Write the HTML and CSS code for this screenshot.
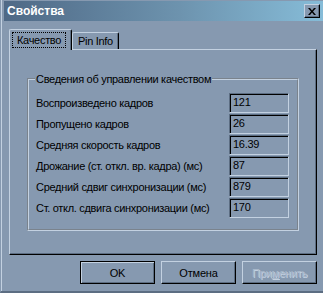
FILE: index.html
```html
<!DOCTYPE html>
<html lang="ru">
  <head>
    <meta charset="UTF-8" />
    <title>Свойства</title>
    <link rel="stylesheet" href="styles.css">
  </head>
  <body>
    <div class="window">
      <div class="titlebar">
        <span class="title">Свойства</span>
        <button class="close">
          <svg width="8" height="7" viewBox="0 0 8 7">
            <path d="M0 0h2l2 2.5 2-2.5h2l-3 3.5 3 3.5h-2l-2-2.5-2 2.5h-2l3-3.5z" fill="#000" />
          </svg>
        </button>
      </div>

      <div class="content">
        <nav class="tabs">
          <div class="tab valgt"><span class="fokus">Качество</span></div>
          <div class="tab">Pin Info</div>
        </nav>

        <section class="panel">
          <fieldset class="gruppe">
            <legend>Сведения об управлении качеством</legend>
            <div class="row"><span>Воспроизведено кадров</span><span class="felt">121</span></div>
            <div class="row"><span>Пропущено кадров</span><span class="felt">26</span></div>
            <div class="row"><span>Средняя скорость кадров</span><span class="felt">16.39</span></div>
            <div class="row"><span>Дрожание (ст. откл. вр. кадра) (мс)</span><span class="felt">87</span></div>
            <div class="row"><span>Средний сдвиг синхронизации (мс)</span><span class="felt">879</span></div>
            <div class="row"><span>Ст. откл. сдвига синхронизации (мс)</span><span class="felt">170</span></div>
          </fieldset>
        </section>

        <footer class="knapper">
          <button class="knap standard">OK</button>
          <button class="knap">Отмена</button>
          <button class="knap deaktiv">При<u>м</u>енить</button>
        </footer>
      </div>
    </div>
  </body>
</html>
```

FILE: styles.css
```css
* {
  box-sizing: border-box;
}

body {
  margin: 0;
  background-color: #8699b0;
  font-family: "Liberation Sans", Arial, sans-serif;
  font-size: 11px;
  letter-spacing: -0.3px;
  color: #000;
  white-space: nowrap;
}

.window {
  width: 323px;
  height: 293px;
  padding: 1px 0 0 2px;
  border-left: 1px solid #8699b0;
  border-bottom: 2px solid #5c6d82;
  box-shadow: inset 1px 0 0 #c3d1e1;
}

.titlebar {
  height: 20px;
  margin-left: 1px;
  display: flex;
  align-items: center;
  justify-content: space-between;
  padding: 0 3px 0 3px;
  background: linear-gradient(to right, #4f6986, #6d93ae 55%, #86bcd8);
}

.title {
  color: #fff;
  font-weight: bold;
  font-size: 12px;
  letter-spacing: 0;
}

.close {
  width: 16px;
  height: 14px;
  padding: 0;
  display: grid;
  place-items: center;
  background-color: #8699b0;
  border: 1px solid;
  border-color: #c3d1e1 #000 #000 #c3d1e1;
  box-shadow: inset -1px -1px 0 #5c6d82;
}

.content {
  padding: 8px 6px 0 6px;
}

.tabs {
  display: flex;
  align-items: flex-end;
  height: 20px;
  position: relative;
  z-index: 1;
}

.tab {
  height: 17px;
  padding: 0 5px 0 5px;
  display: flex;
  align-items: center;
  border: 1px solid #c3d1e1;
  border-bottom: none;
  border-right: 1px solid #000;
  border-radius: 2px 2px 0 0;
  box-shadow: inset -1px 0 0 #5c6d82;
  background-color: #8699b0;
}

.tab.valgt {
  height: 21px;
  margin-bottom: -1px;
  padding: 0 2px 0 2px;
  width: 63px;
}

.fokus {
  border: 1px dotted #000;
  padding: 0 4px;
  line-height: 14px;
}

.panel {
  height: 206px;
  width: 308px;
  padding: 22px 17px 0 17px;
  border: 1px solid;
  border-color: #c3d1e1 #000 #000 #c3d1e1;
  box-shadow: inset -1px -1px 0 #5c6d82;
}

.gruppe {
  margin: 0;
  height: 159px;
  padding: 7px 8px 0 7px;
  border: 2px groove #c3d1e1;
  display: flex;
  flex-direction: column;
  gap: 1px;
}

.gruppe legend {
  padding: 0 1px;
  margin-left: -1px;
  line-height: 14px;
}

.row {
  display: flex;
  justify-content: space-between;
  align-items: center;
  height: 20px;
}

.felt {
  width: 60px;
  height: 20px;
  padding: 2px 0 0 3px;
  border: 1px solid;
  border-color: #5c6d82 #c3d1e1 #c3d1e1 #5c6d82;
  box-shadow: inset 1px 1px 0 #000;
}

.knapper {
  display: flex;
  justify-content: flex-end;
  gap: 6px;
  margin-top: 6px;
}

.knap {
  width: 75px;
  height: 23px;
  font-family: inherit;
  font-size: 11px;
  letter-spacing: -0.2px;
  background-color: #8699b0;
  border: 1px solid;
  border-color: #c3d1e1 #000 #000 #c3d1e1;
  box-shadow: inset -1px -1px 0 #5c6d82;
  padding: 0;
}

.knap.standard {
  border: 1px solid #000;
  box-shadow: inset 1px 1px 0 #c3d1e1, inset -1px -1px 0 #5c6d82;
}

.knap.deaktiv {
  color: #a9b8ca;
  text-shadow: 1px 1px 0 #c3d1e1;
}
```
